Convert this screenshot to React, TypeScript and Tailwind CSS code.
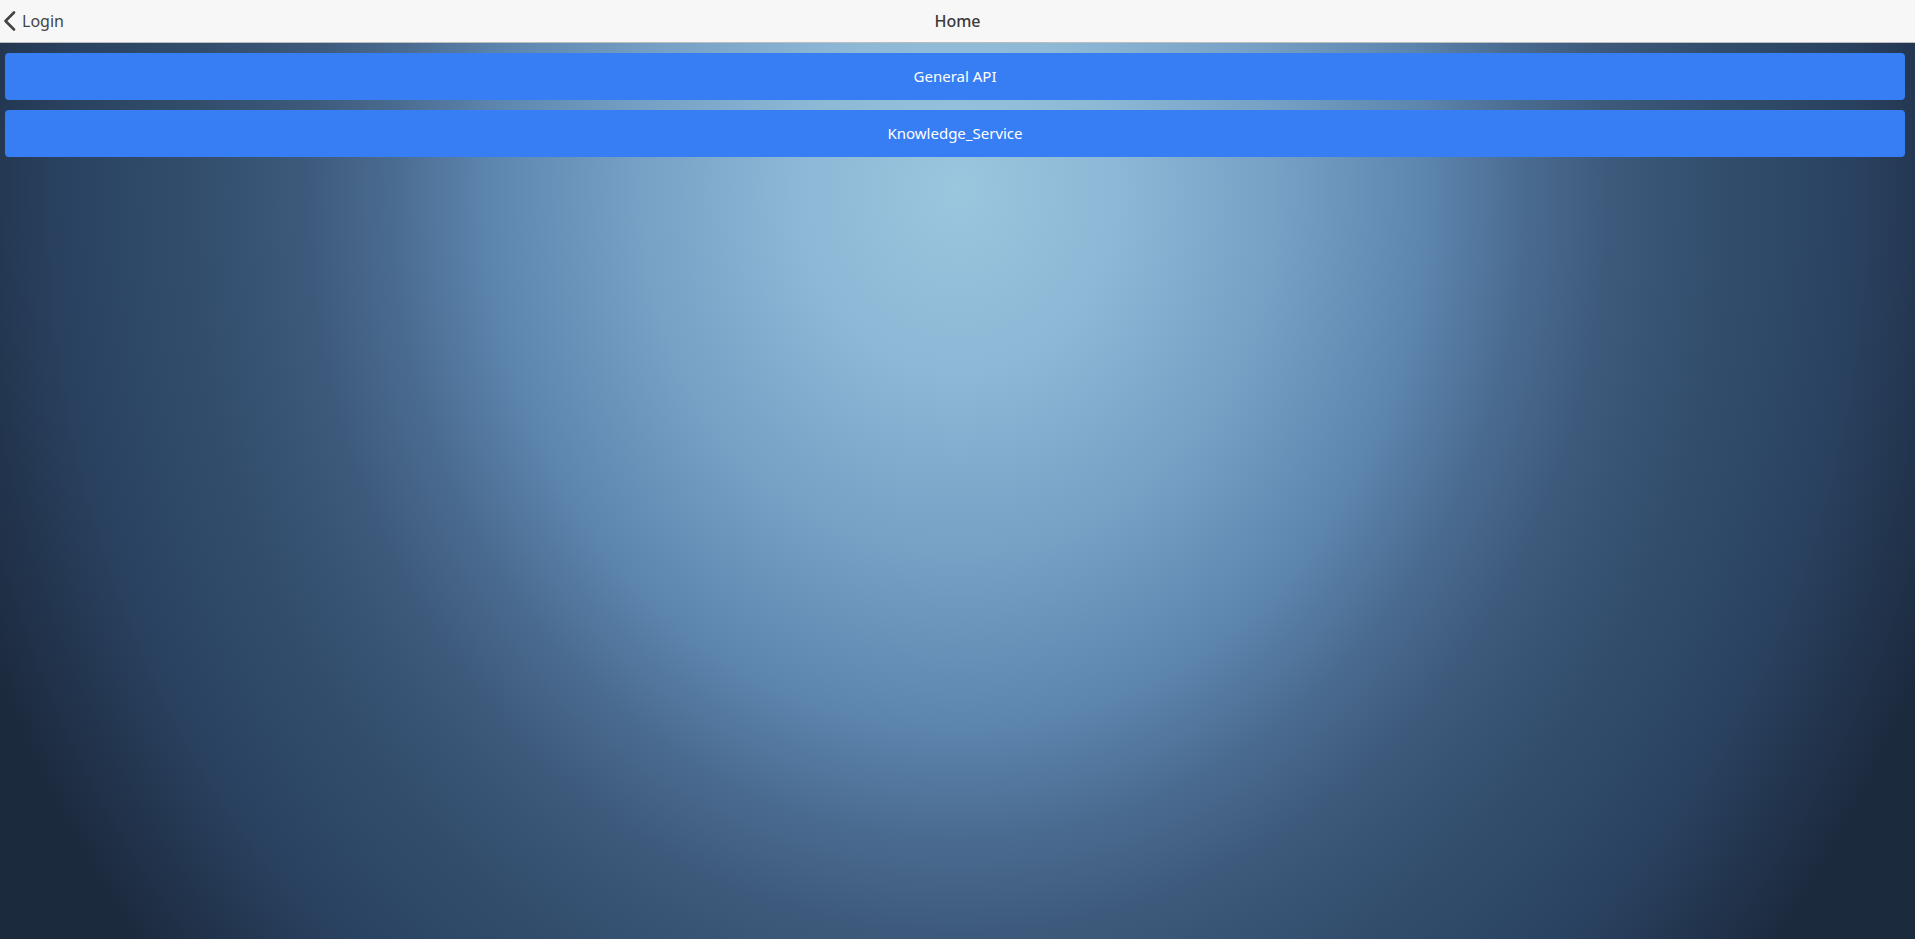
import React from 'react'

const items = ['General API', 'Knowledge_Service']

export default function App() {
  return (
    <div
      className="min-h-screen w-full bg-[#1c2a3e] bg-[radial-gradient(ellipse_1050px_1200px_at_50%_190px,#9ac6de_0%,#8db8d6_15%,#77a1c5_30%,#5e87b0_44%,#4a6b90_54%,#3d5a7c_62%,#324d6c_73%,#2a4261_85%,#1c2a3e_100%)] font-['Noto_Sans','Open_Sans',sans-serif]"
    >
      {/* Top bar */}
      <header className="relative flex h-[43px] items-center justify-center border-b border-[#bdbdbd] bg-[#f7f7f7]">
        <button className="absolute left-0 top-0 flex h-full items-center gap-[6px] pl-[3px] text-[#444]">
          <svg width="13" height="20" viewBox="0 0 13 20" fill="none">
            <polyline points="11,1.5 2.5,10 11,18.5" stroke="#444" strokeWidth="2.6" strokeLinecap="round" strokeLinejoin="round" />
          </svg>
          <span className="text-[16px]">Login</span>
        </button>
        <h1 className="text-[16px] font-medium text-[#3a3a3a]">Home</h1>
      </header>

      <div className="flex flex-col gap-[10px] pl-[5px] pr-[10px] pt-[10px]">
        {items.map((name) => (
          <button
            key={name}
            className="flex h-[47px] w-full items-center justify-center rounded-[4px] bg-[#377ef4] text-[15px] text-white"
          >
            {name}
          </button>
        ))}
      </div>
    </div>
  )
}
